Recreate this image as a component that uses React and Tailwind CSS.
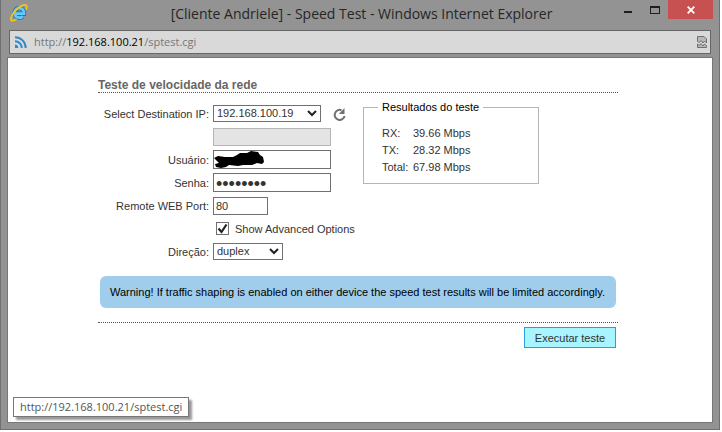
import { useState } from 'react';

const results = [
  { label: 'RX:', value: '39.66 Mbps' },
  { label: 'TX:', value: '28.32 Mbps' },
  { label: 'Total:', value: '67.98 Mbps' },
];

function IeLogo() {
  return (
    <svg viewBox="0 0 18 18" className="w-[18px] h-[18px]">
      <path
        d="M12.800 12.200A4.800 4.800 0 1 1 14 9.700H4.800"
        fill="none"
        stroke="#1c73ae"
        strokeWidth="4.400"
      />
      <path
        d="M12.800 12.200A4.800 4.800 0 1 1 14 9.700H4.800"
        fill="none"
        stroke="#66c8f7"
        strokeWidth="2.800"
      />
      <path
        d="M16.200 5c.8-2 .7-3.200-.1-3.700C14.200.2 9.500 2.200 5.600 6.300 1.900 10.300.1 14.900 1.500 16.300c.8.800 2.500.4 4.500-.8"
        fill="none"
        stroke="#f5c518"
        strokeWidth="1.800"
        strokeLinecap="round"
      />
    </svg>
  );
}

function FeedIcon() {
  return (
    <svg viewBox="0 0 12 12" className="w-3 h-3" fill="none" stroke="#2e8bcb">
      <path d="M0 1.300c6 0 10.700 4.600 10.700 10.700" strokeWidth="2" />
      <path d="M0 5.200c3.800 0 6.800 3 6.800 6.800" strokeWidth="2" />
      <path d="M0 8.600c2 0 3.400 1.400 3.400 3.400H0z" fill="#2e8bcb" stroke="none" />
    </svg>
  );
}

function BrokenPageIcon() {
  return (
    <svg viewBox="0 0 10 12" className="w-[10px] h-3" fill="#b8b8b8" stroke="#707070">
      <path d="M.5 5.500V.5h6.500L9.500 3v4L7.500 5 6 7 4 4.500 2.500 6.500z" />
      <path d="M.5 11.500V8L2.500 9.500 4 7.500l2 2.500 1.500-2 2 1.500v2z" />
    </svg>
  );
}

function TitleBar() {
  return (
    <header className="grid grid-cols-[1fr_auto_1fr] h-[30px] pl-[9px] pr-1.5">
      <div className="pt-1">
        <IeLogo />
      </div>
      <h1 className="pt-1 text-[14px] leading-5 text-[#262626]">
        [Cliente Andriele] - Speed Test - Windows Internet Explorer
      </h1>
      <div className="flex justify-end h-[19px]">
        <button type="button" aria-label="Minimize" className="w-7 flex items-center justify-center">
          <svg viewBox="0 0 10 10" className="w-[10px] h-[10px]">
            <path d="M1 6h8v2H1z" fill="#1e1e1e" />
          </svg>
        </button>
        <button type="button" aria-label="Maximize" className="w-[26px] flex items-center justify-center">
          <svg viewBox="0 0 10 8" className="w-[10px] h-2">
            <path d="M0 0h10v8H0zM1 2v5h8V2z" fill="#1e1e1e" fillRule="evenodd" />
          </svg>
        </button>
        <button type="button" aria-label="Close" className="w-[45px] flex items-center justify-center bg-[#c75050]">
          <svg viewBox="0 0 8 8" className="w-2 h-2">
            <path d="M.7.7l6.600 6.600M7.300.7L.7 7.300" stroke="#fff" strokeWidth="1.800" />
          </svg>
        </button>
      </div>
    </header>
  );
}

function AddressBar() {
  return (
    <div className="mx-2 h-6 flex items-center border border-[#666] bg-[#d9d9d9] pl-[5px] pr-[3px] text-[11px] leading-4 text-[#777]">
      <FeedIcon />
      <span className="ml-[7px] grow">
        http://<span className="text-black">192.168.100.21</span>/sptest.cgi
      </span>
      <BrokenPageIcon />
    </div>
  );
}

function Row({ label, htmlFor, children }) {
  return (
    <div className="flex items-center gap-1 h-[19px]">
      <label htmlFor={htmlFor} className="w-[111px] text-right whitespace-nowrap">
        {label}
      </label>
      {children}
    </div>
  );
}

function Select({ id, width, children }) {
  return (
    <span className={`relative ${width}`}>
      <select
        id={id}
        className="block w-full h-[17px] appearance-none border border-[#707070] bg-white pl-[3px] leading-[15px] text-[#333]"
      >
        {children}
      </select>
      <svg viewBox="0 0 10 7" className="absolute right-1 top-[5px] w-[10px] h-[7px] pointer-events-none">
        <path d="M1 1l4 4 4-4" fill="none" stroke="#222" strokeWidth="2" />
      </svg>
    </span>
  );
}

function SpeedForm() {
  const [advanced, setAdvanced] = useState(true);

  return (
    <div className="w-[265px] flex flex-col gap-1">
      <Row label="Select Destination IP:" htmlFor="ip">
        <Select id="ip" width="w-[108px]">
          <option>192.168.100.19</option>
        </Select>
        <button type="button" aria-label="Refresh" className="ml-2">
          <svg viewBox="0 0 14 14" className="w-[14px] h-[14px]">
            <path d="M8.500 3.200A5 5 0 1 0 11.600 9" fill="none" stroke="#707070" strokeWidth="2" />
            <path d="M11.500 1v6H5.800z" fill="#707070" />
          </svg>
        </button>
      </Row>
      <Row>
        <input
          disabled
          aria-label="Destination IP"
          className="w-[118px] h-[18px] border border-[#b5b5b5] bg-[#e4e4e4]"
        />
      </Row>
      <Row label="Usuário:" htmlFor="user">
        <span className="relative w-[118px]">
          <input id="user" className="block w-full h-[19px] border border-[#707070] bg-white px-0.5" />
          <svg viewBox="0 0 52 18" className="absolute left-0 top-0 w-[52px] h-[18px] pointer-events-none">
            <path
              d="M1 8l4-2 7 1 8 0 4-2 3-2 7 0 4-2 7 1 2 3 3 2 1 5-2 2-5-1-5 2-9 0-5 1-9-1-3 2-5 1-5-1-1-3 4-1z"
              fill="#000"
            />
          </svg>
        </span>
      </Row>
      <Row label="Senha:" htmlFor="password">
        <input
          id="password"
          type="password"
          defaultValue="ubntubnt"
          className="w-[118px] h-[19px] border border-[#707070] bg-white px-0.5 pt-[3px] text-[18px] leading-4 text-[#333]"
        />
      </Row>
      <Row label="Remote WEB Port:" htmlFor="port">
        <input
          id="port"
          defaultValue="80"
          className="w-[55px] h-[18px] border border-[#707070] bg-white px-0.5 text-[#333]"
        />
      </Row>
      <div className="flex items-center h-[19px] pl-[118px]">
        <span className="relative">
          <input
            id="advanced"
            type="checkbox"
            checked={advanced}
            onChange={(e) => setAdvanced(e.target.checked)}
            className="block w-[13px] h-[13px] appearance-none border border-[#707070] bg-white"
          />
          {advanced && (
            <svg viewBox="0 0 13 13" className="absolute inset-0 w-[13px] h-[13px] pointer-events-none">
              <path d="M2.500 6.500l3 3.500 5-7.500" fill="none" stroke="#222" strokeWidth="2.200" />
            </svg>
          )}
        </span>
        <label htmlFor="advanced" className="ml-1.5 whitespace-nowrap">
          Show Advanced Options
        </label>
      </div>
      <Row label="Direção:" htmlFor="direction">
        <Select id="direction" width="w-[70px]">
          <option>duplex</option>
        </Select>
      </Row>
    </div>
  );
}

function Results() {
  return (
    <fieldset className="w-[176px] h-[84px] -mt-1 border border-[#b5b5b5] pl-[18px]">
      <legend className="-ml-1 px-1 leading-[14px] text-black">Resultados do teste</legend>
      <table className="mt-[11px] leading-[17px]">
        <tbody>
          {results.map((r) => (
            <tr key={r.label}>
              <th scope="row" className="w-[31px] p-0 text-left font-normal">
                {r.label}
              </th>
              <td className="p-0">{r.value}</td>
            </tr>
          ))}
        </tbody>
      </table>
    </fieldset>
  );
}

export default function App() {
  return (
    <div className="min-h-screen flex flex-col bg-white pr-0.5 pb-0.5">
      <div className="grow flex flex-col border-x border-b border-[#707070] bg-[#939393] font-['Open_Sans','Noto_Sans',sans-serif]">
        <TitleBar />
        <AddressBar />
        <div className="relative grow mx-1.5 mt-[3px] mb-1.5 border border-[#777] bg-white pt-5 pr-1">
          <main className="max-w-[520px] mx-auto font-['Liberation_Sans',Arial,sans-serif] text-[11px] leading-[14px] text-[#333]">
            <h2 className="border-b border-dotted border-[#555] text-[12px] leading-[14px] font-bold text-[#666]">
              Teste de velocidade da rede
            </h2>
            <div className="flex mt-[11px]">
              <SpeedForm />
              <Results />
            </div>
            <p className="mt-[15px] mx-0.5 rounded-md bg-[#9fcdeb] px-2.5 py-[9px] text-black">
              Warning! If traffic shaping is enabled on either device the speed test results will be limited accordingly.
            </p>
            <div className="mt-3.5 border-t border-dotted border-[#555] pt-1 pr-0.5 flex justify-end">
              <button type="button" className="h-[21px] w-[92px] border border-[#2a9fdc] bg-[#a8f4ff]">
                Executar teste
              </button>
            </div>
          </main>
          <a
            href="#sptest"
            className="absolute left-[5px] bottom-[5px] border border-[#777] bg-white px-1.5 py-px text-[11px] leading-4 text-[#555] shadow-[3px_3px_2px_#999]"
          >
            http://192.168.100.21/sptest.cgi
          </a>
        </div>
      </div>
    </div>
  );
}
